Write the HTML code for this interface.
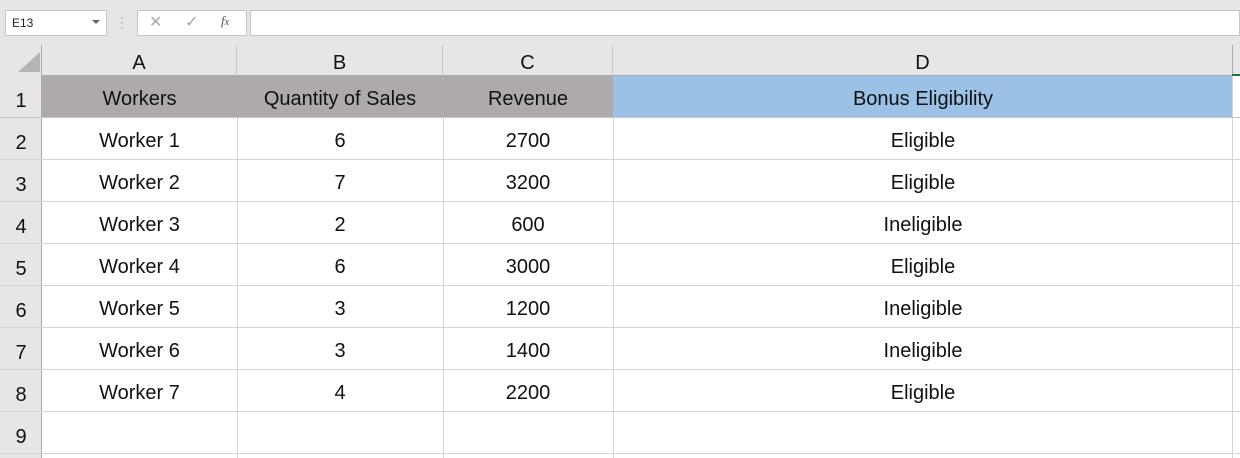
<!DOCTYPE html>
<html><head><style>
body{margin:0;width:1240px;height:458px;overflow:hidden;background:#fff;font-family:"Liberation Sans",Calibri,sans-serif;position:relative}
.a{position:absolute;box-sizing:border-box}
.c{position:absolute;box-sizing:border-box;display:flex;align-items:center;justify-content:center;font-size:20px;color:#111;padding-top:5px}
</style></head><body>
<div class="a" style="left:0;top:0;width:1240px;height:45px;background:#e6e6e6"></div>
<div class="a" style="left:5px;top:10px;width:102px;height:26px;background:#fff;border:1px solid #c6c6c6;font-size:12px;padding:5px 0 0 6px;color:#222">E13</div>
<div class="a" style="left:92px;top:20px;width:0;height:0;border-left:4px solid transparent;border-right:4px solid transparent;border-top:4px solid #666"></div>
<div class="a" style="left:120px;top:15px;color:#999;font-size:12px;line-height:5px">·<br>·<br>·</div>
<div class="a" style="left:137px;top:10px;width:110px;height:26px;background:#fff;border:1px solid #c6c6c6"></div>
<div class="a" style="left:149px;top:12px;color:#aaa;font-size:16px">✕</div>
<div class="a" style="left:185px;top:12px;color:#aaa;font-size:16px">✓</div>
<div class="a" style="left:221px;top:13px;color:#555;font-size:13px;font-style:italic;font-family:'Liberation Serif',serif">f<span style="font-size:10px">x</span></div>
<div class="a" style="left:250px;top:10px;width:990px;height:26px;background:#fff;border:1px solid #c6c6c6"></div>
<div class="a" style="left:0;top:45px;width:1240px;height:31px;background:#e6e6e6;border-bottom:1px solid #aaa"></div>
<div class="a" style="left:0;top:45px;width:42px;height:413px;background:#e6e6e6;border-right:1px solid #aaa"></div>
<div class="a" style="left:18px;top:52px;width:0;height:0;border-left:22px solid transparent;border-bottom:20px solid #b5b5b5"></div>
<div class="c" style="left:42px;top:45px;width:195px;height:31px;border-right:1px solid #c6c6c6">A</div>
<div class="c" style="left:237px;top:45px;width:206px;height:31px;border-right:1px solid #c6c6c6">B</div>
<div class="c" style="left:443px;top:45px;width:170px;height:31px;border-right:1px solid #c6c6c6">C</div>
<div class="c" style="left:613px;top:45px;width:620px;height:31px;border-right:1px solid #aaa">D</div>
<div class="a" style="left:1232px;top:74px;width:8px;height:2px;background:#217346"></div>
<div class="a" style="left:42px;top:76px;width:571px;height:42px;background:#aeaaaa"></div>
<div class="a" style="left:613px;top:76px;width:620px;height:42px;background:#9bc2e6"></div>
<div class="a" style="left:237px;top:118px;width:1px;height:340px;background:#d4d4d4"></div>
<div class="a" style="left:443px;top:118px;width:1px;height:340px;background:#d4d4d4"></div>
<div class="a" style="left:613px;top:118px;width:1px;height:340px;background:#d4d4d4"></div>
<div class="a" style="left:1232px;top:76px;width:1px;height:382px;background:#d4d4d4"></div>
<div id="g"></div>
<script>
var rows=[["Workers","Quantity of Sales","Revenue","Bonus Eligibility"],["Worker 1","6","2700","Eligible"],["Worker 2","7","3200","Eligible"],["Worker 3","2","600","Ineligible"],["Worker 4","6","3000","Eligible"],["Worker 5","3","1200","Ineligible"],["Worker 6","3","1400","Ineligible"],["Worker 7","4","2200","Eligible"],["","","",""]];
var xs=[42,237,443,613],ws=[195,206,170,620],h="";
for(var i=0;i<9;i++){var t=76+i*42;
h+='<div class="a" style="left:0;top:'+(t+41)+'px;width:1240px;height:1px;background:'+(i==0?'#c6c6c6':'#d4d4d4')+'"></div>';
h+='<div class="c" style="left:0;top:'+(t+2)+'px;width:42px;height:42px;font-size:20px">'+(i+1)+'</div>';
for(var j=0;j<4;j++)h+='<div class="c" style="left:'+xs[j]+'px;top:'+t+'px;width:'+ws[j]+'px;height:42px">'+rows[i][j]+'</div>';}
document.getElementById("g").innerHTML=h;
</script>
</body></html>
